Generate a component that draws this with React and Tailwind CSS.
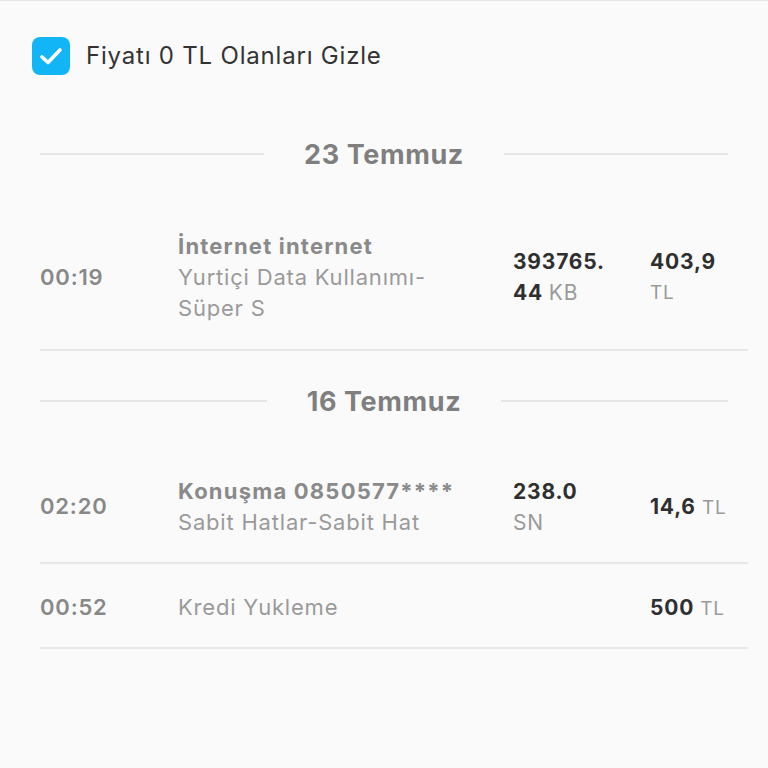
// Usage history page
const FONT = { fontFamily: 'Inter, "Noto Sans", sans-serif' };

const DateSeparator = ({ label }) => (
  <div className="flex items-center px-10 h-[30px]">
    <div className="flex-1 h-[2px] bg-[#e6e6e6]" />
    <span className="px-10 text-[27px] font-bold text-[#7f7f7f] leading-none tracking-[0.6px]">{label}</span>
    <div className="flex-1 h-[2px] bg-[#e6e6e6]" />
  </div>
);

const Row = ({ time, title, subtitle, amount, amountUnit, price, priceInline, height }) => (
  <div className={`ml-10 mr-5 flex items-center border-b-2 border-[#e8e8e8] ${height}`}>
    <div className="w-[138px] text-[22px] font-semibold text-[#888888] tracking-[0.8px]">{time}</div>
    <div className="w-[335px] text-[22px] leading-[31px]">
      {title && <div className="font-bold text-[#8a8a8a] tracking-[1.2px]">{title}</div>}
      <div className="text-[#9a9a9a] tracking-[0.8px]">{subtitle}</div>
    </div>
    <div className="w-[137px] text-[21px] leading-[31px] tracking-[0.8px]">
      {amount && (
        <>
          <div className="font-bold text-[#2f2f2f]">{amount[0]}</div>
          <div>
            {amount[1] && <span className="font-bold text-[#2f2f2f]">{amount[1]} </span>}
            <span className="text-[#9a9a9a]">{amountUnit}</span>
          </div>
        </>
      )}
    </div>
    <div className="flex-1 text-[21px] leading-[31px] tracking-[0.8px]">
      {priceInline ? (
        <div>
          <span className="font-bold text-[#2f2f2f]">{price}</span>
          <span className="text-[#9a9a9a] text-[19px]"> TL</span>
        </div>
      ) : (
        <>
          <div className="font-bold text-[#2f2f2f]">{price}</div>
          <div className="text-[#9a9a9a] text-[19px]">TL</div>
        </>
      )}
    </div>
  </div>
);

export default function App() {
  return (
    <div className="min-h-screen bg-[#fafafa] border-t border-[#e6e6e6]" style={FONT}>
      <div className="mt-[36px] ml-8 h-[38px] flex items-center gap-4">
        <div className="w-[38px] h-[38px] rounded-[8px] bg-[#12b5f6] flex items-center justify-center">
          <svg width="28" height="28" viewBox="0 0 28 28" fill="none">
            <path d="M5 15l6 5.5L23 8" stroke="white" strokeWidth="3.6" strokeLinecap="round" strokeLinejoin="round" />
          </svg>
        </div>
        <span className="text-[24px] text-[#333333] tracking-[0.8px]">Fiyatı 0 TL Olanları Gizle</span>
      </div>

      <div className="mt-[64px]">
        <DateSeparator label="23 Temmuz" />
      </div>

      <div className="mt-[36px]">
        <Row
          height="h-[146px]"
          time="00:19"
          title="İnternet internet"
          subtitle={<>Yurtiçi Data Kullanımı-<br />Süper S</>}
          amount={['393765.', '44']}
          amountUnit="KB"
          price="403,9"
        />
      </div>

      <div className="h-[100px] flex items-center">
        <div className="w-full"><DateSeparator label="16 Temmuz" /></div>
      </div>

      <Row
        height="h-[113px]"
        time="02:20"
        title="Konuşma 0850577****"
        subtitle="Sabit Hatlar-Sabit Hat"
        amount={['238.0', null]}
        amountUnit="SN"
        price="14,6"
        priceInline
      />
      <Row
        height="h-[85px] pt-[4px]"
        time="00:52"
        subtitle="Kredi Yukleme"
        price="500"
        priceInline
      />
    </div>
  );
}
